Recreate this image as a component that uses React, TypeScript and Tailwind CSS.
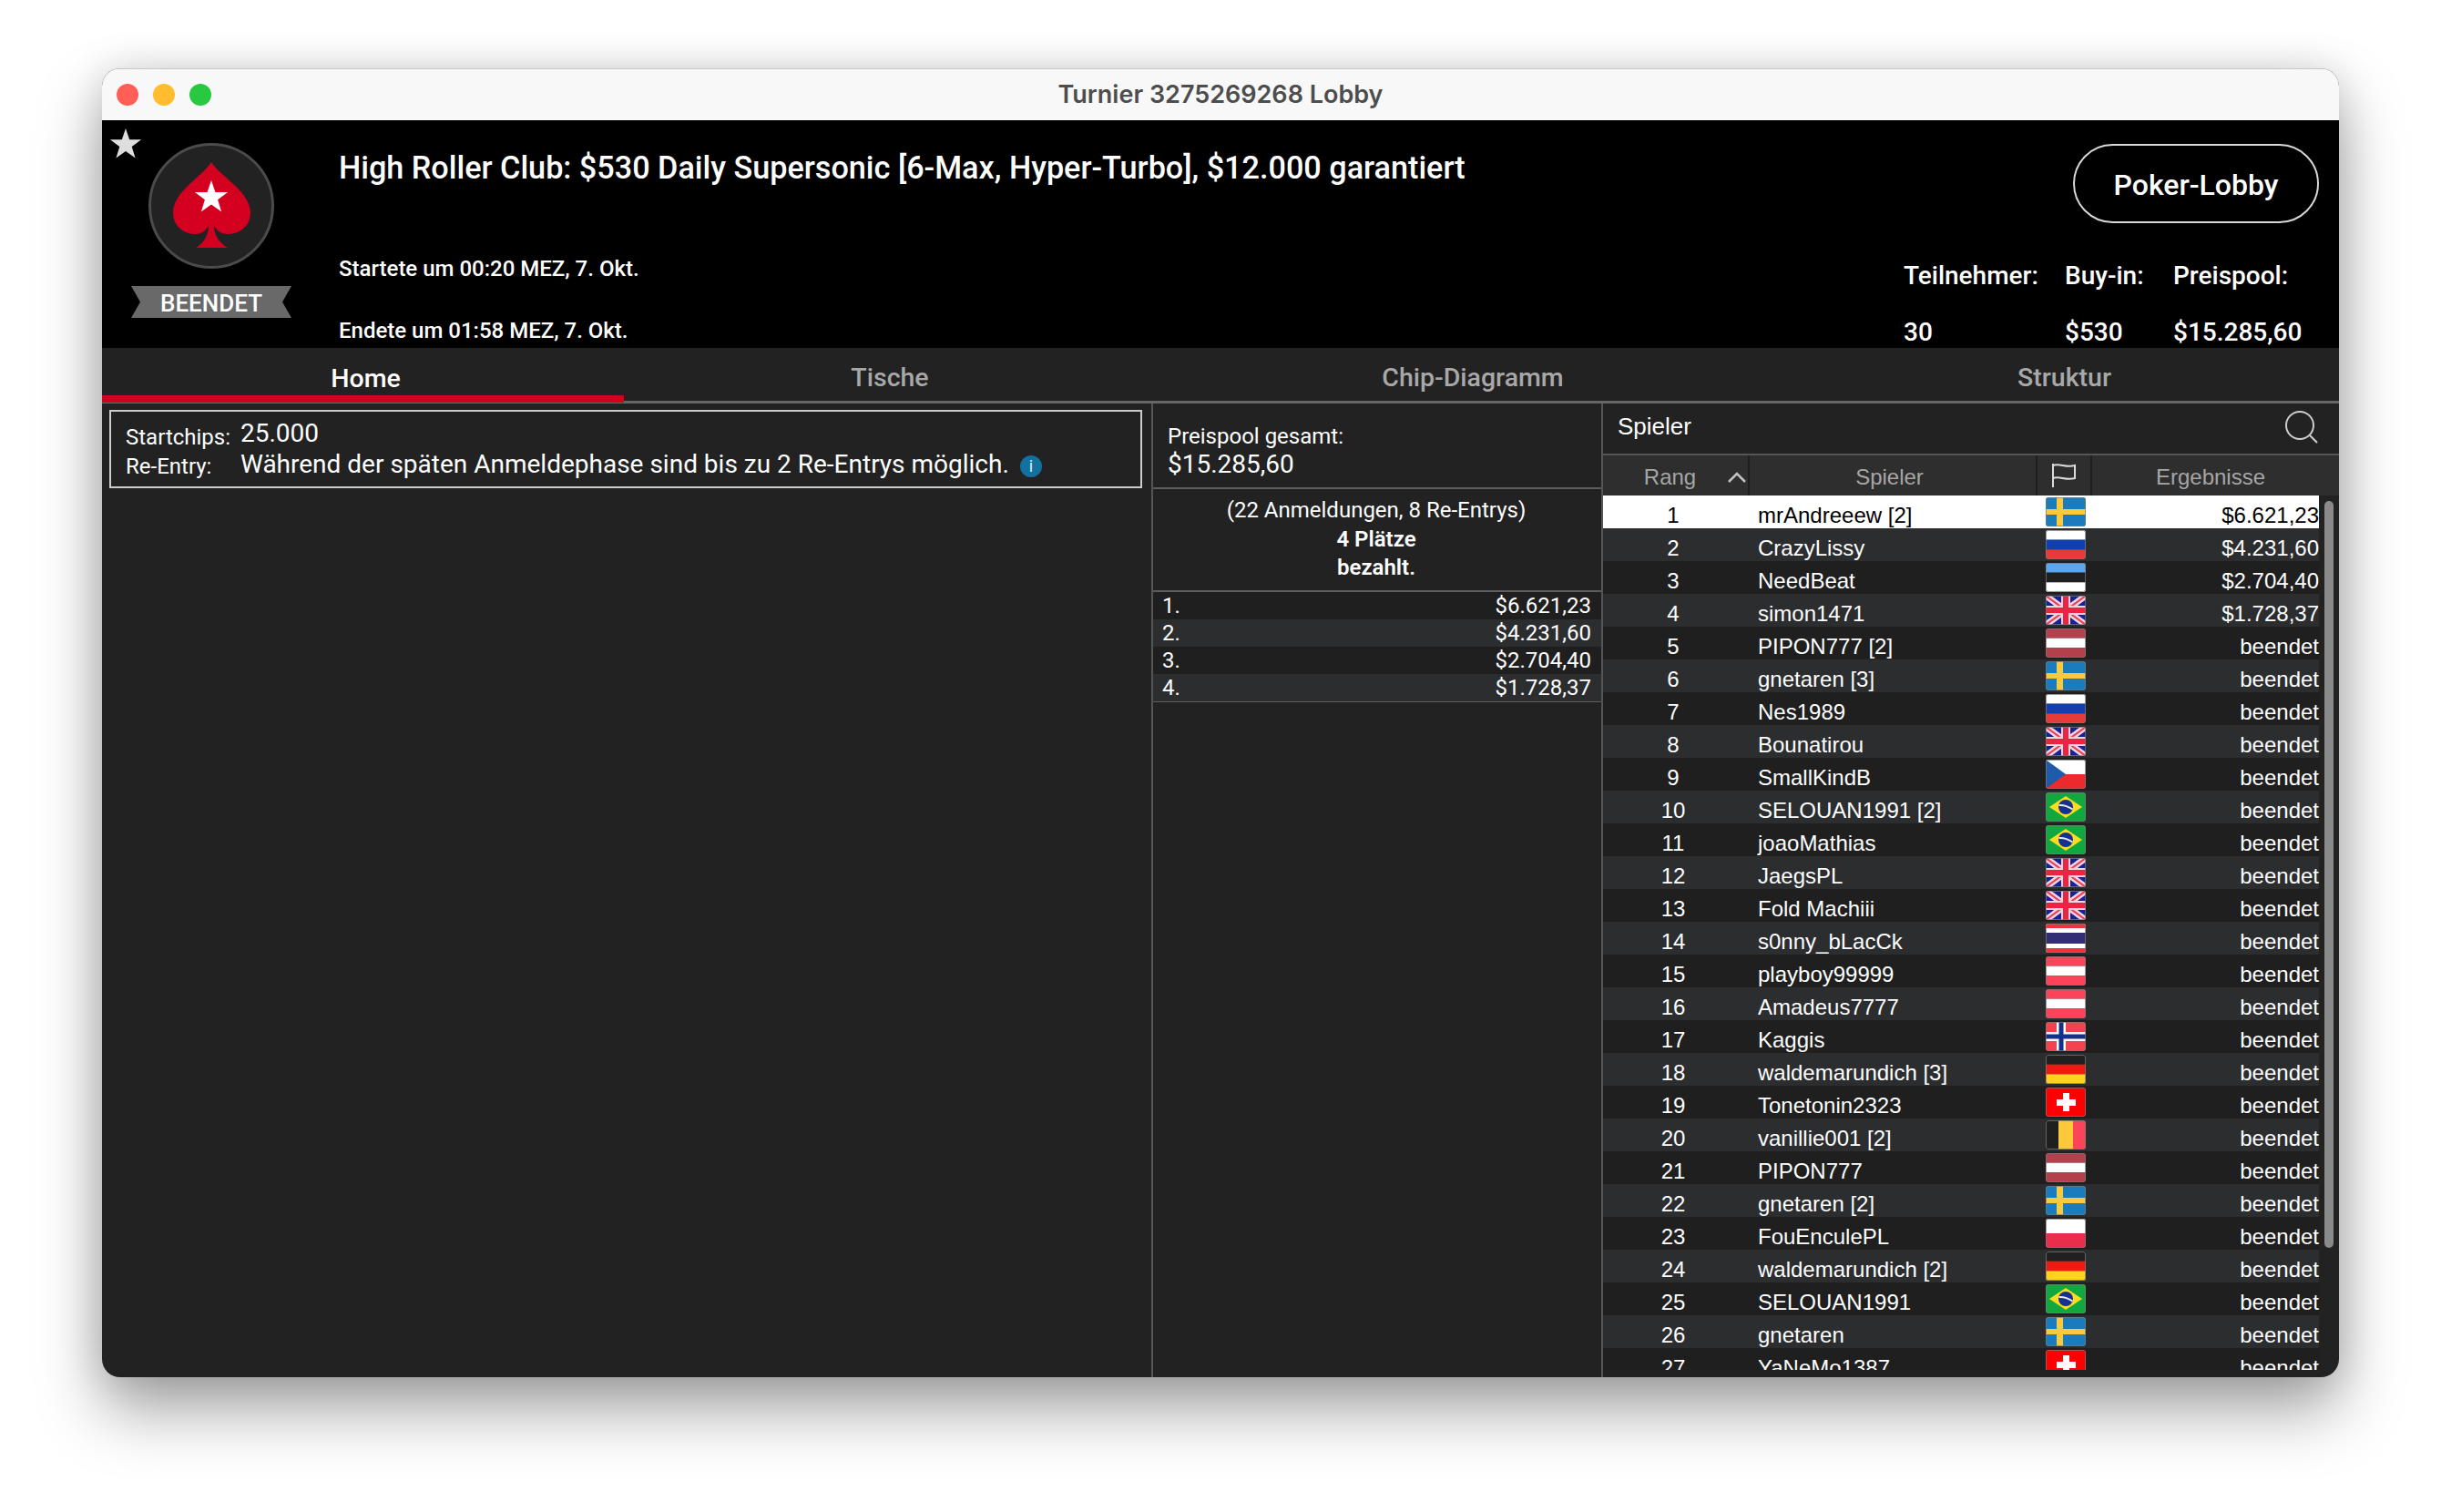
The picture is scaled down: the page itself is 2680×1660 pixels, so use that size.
const players: [string, string, string][] = [
  ['1', 'mrAndreeew [2]', 'se'],
  ['2', 'CrazyLissy', 'ru'],
  ['3', 'NeedBeat', 'ee'],
  ['4', 'simon1471', 'gb'],
  ['5', 'PIPON777 [2]', 'lv'],
  ['6', 'gnetaren [3]', 'se'],
  ['7', 'Nes1989', 'ru'],
  ['8', 'Bounatirou', 'gb'],
  ['9', 'SmallKindB', 'cz'],
  ['10', 'SELOUAN1991 [2]', 'br'],
  ['11', 'joaoMathias', 'br'],
  ['12', 'JaegsPL', 'gb'],
  ['13', 'Fold Machiii', 'gb'],
  ['14', 's0nny_bLacCk', 'th'],
  ['15', 'playboy99999', 'at'],
  ['16', 'Amadeus7777', 'at'],
  ['17', 'Kaggis', 'no'],
  ['18', 'waldemarundich [3]', 'de'],
  ['19', 'Tonetonin2323', 'ch'],
  ['20', 'vanillie001 [2]', 'be'],
  ['21', 'PIPON777', 'lv'],
  ['22', 'gnetaren [2]', 'se'],
  ['23', 'FouEnculePL', 'pl'],
  ['24', 'waldemarundich [2]', 'de'],
  ['25', 'SELOUAN1991', 'br'],
  ['26', 'gnetaren', 'se'],
  ['27', 'YaNeMo1387', 'ch'],
];

const results = ['$6.621,23', '$4.231,60', '$2.704,40', '$1.728,37'];

function Stripes({ colors }: { colors: string[] }) {
  const h = 32 / colors.length;
  return (
    <>
      {colors.map((c, i) => (
        <rect key={i} x="0" y={i * h} width="44" height={h} fill={c} />
      ))}
    </>
  );
}

function Flag({ code }: { code: string }) {
  let body = null;
  if (code === 'se')
    body = (
      <>
        <rect width="44" height="32" fill="#1a7cbd" />
        <rect x="12" width="7" height="32" fill="#fdc93c" />
        <rect y="13" width="44" height="6" fill="#fdc93c" />
      </>
    );
  if (code === 'ru') body = <Stripes colors={['#ffffff', '#0f3fb0', '#e63b36']} />;
  if (code === 'ee') body = <Stripes colors={['#5ba8f2', '#1f1f1f', '#ffffff']} />;
  if (code === 'lv') body = <Stripes colors={['#b2404d', '#ffffff', '#b2404d']} />;
  if (code === 'at') body = <Stripes colors={['#fb4459', '#ffffff', '#fb4459']} />;
  if (code === 'de') body = <Stripes colors={['#202020', '#ec1c14', '#ffd31f']} />;
  if (code === 'pl') body = <Stripes colors={['#ffffff', '#e92d4c']} />;
  if (code === 'gb')
    body = (
      <>
        <rect width="44" height="32" fill="#16209a" />
        <path d="M0 0L44 32M44 0L0 32" stroke="#f5d5dc" strokeWidth="7" />
        <path d="M0 0L44 32M44 0L0 32" stroke="#ee3a5a" strokeWidth="2" />
        <rect x="17" width="10" height="32" fill="#f5d5dc" />
        <rect y="11" width="44" height="10" fill="#f5d5dc" />
        <rect x="19" width="6" height="32" fill="#ec2444" />
        <rect y="13" width="44" height="6" fill="#ec2444" />
      </>
    );
  if (code === 'cz')
    body = (
      <>
        <rect width="44" height="16" fill="#ffffff" />
        <rect y="16" width="44" height="16" fill="#ec2a2c" />
        <path d="M0 0L22 16L0 32Z" fill="#1f5ba8" />
      </>
    );
  if (code === 'br')
    body = (
      <>
        <rect width="44" height="32" fill="#10a83f" />
        <path d="M22 4L40 16L22 28L4 16Z" fill="#fbdc1e" />
        <circle cx="22" cy="16" r="8" fill="#16308f" />
        <path d="M14.5 14C20 13.5 25 15.5 29.5 18.5" stroke="#e8e8e8" strokeWidth="2" fill="none" />
      </>
    );
  if (code === 'th')
    body = (
      <>
        <rect width="44" height="32" fill="#ffffff" />
        <rect width="44" height="5" fill="#f0323e" />
        <rect y="27" width="44" height="5" fill="#f0323e" />
        <rect y="10" width="44" height="12" fill="#332d74" />
      </>
    );
  if (code === 'no')
    body = (
      <>
        <rect width="44" height="32" fill="#f2434f" />
        <rect x="12" width="10" height="32" fill="#ffffff" />
        <rect y="11" width="44" height="10" fill="#ffffff" />
        <rect x="14.5" width="5" height="32" fill="#13308a" />
        <rect y="13.5" width="44" height="5" fill="#13308a" />
      </>
    );
  if (code === 'ch')
    body = (
      <>
        <rect width="44" height="32" fill="#fe0000" />
        <rect x="19" y="6" width="7" height="20" fill="#ffffff" />
        <rect x="12" y="13" width="21" height="7" fill="#ffffff" />
      </>
    );
  if (code === 'be')
    body = (
      <>
        <rect width="14" height="32" fill="#1f1f1f" />
        <rect x="14" width="16" height="32" fill="#fdc93c" />
        <rect x="30" width="14" height="32" fill="#fb4459" />
      </>
    );
  return (
    <svg viewBox="0 0 44 32" preserveAspectRatio="none" className="w-[44px] h-[32px] rounded-[3px]">
      {body}
      <rect x="0.5" y="0.5" width="43" height="31" rx="2.5" fill="none" stroke="#7a7a7a" strokeOpacity="0.75" />
    </svg>
  );
}

function StarShape({ fill }: { fill: string }) {
  return (
    <polygon
      fill={fill}
      points="70,43 74.4,55.9 88.1,56.1 77.1,64.3 81.2,77.4 70,69.5 58.8,77.4 62.9,64.3 51.9,56.1 65.6,55.9"
    />
  );
}

function Logo() {
  return (
    <svg viewBox="0 0 140 140" className="w-[140px] h-[140px]">
      <circle cx="70" cy="70" r="67.5" fill="#222222" stroke="#4b4b4b" strokeWidth="3" />
      <path
        d="M70 22C60 38 28 54 28 78C28 92 40 101 52 101C60 101 64 97 67 92C67 104 60 112 53 116L88 116C81 112 73 104 73 92C76 97 80 101 88 101C101 101 113 92 113 78C113 54 80 38 70 22Z"
        fill="#d40020"
      />
      <g transform="translate(0 -1)">
        <StarShape fill="#ffffff" />
      </g>
    </svg>
  );
}

export default function App() {
  return (
    <div className="w-[2680px] h-[1660px] bg-white pl-[112px] pt-[75px] font-['Roboto',sans-serif]">
      <div className="w-[2456px] h-[1437px] rounded-[20px] overflow-hidden flex flex-col bg-[#222222] shadow-[0_36px_70px_rgba(0,0,0,0.36),0_0_44px_rgba(0,0,0,0.13)]">
        {/* title bar */}
        <div className="relative h-[57px] shrink-0 bg-[#f8f8f8] border-t border-[#c8c8c8] flex items-center justify-center">
          <div className="absolute left-[16px] top-[16px] flex gap-[16px]">
            <span className="w-[24px] h-[24px] rounded-full bg-[#ff5f57]" />
            <span className="w-[24px] h-[24px] rounded-full bg-[#febc2e]" />
            <span className="w-[24px] h-[24px] rounded-full bg-[#28c840]" />
          </div>
          <span className="font-['Inter',sans-serif] font-semibold text-[27px] leading-none pb-[2px] text-[#4d4d4d]">
            Turnier 3275269268 Lobby
          </span>
        </div>

        {/* header */}
        <div className="relative h-[250px] shrink-0 bg-black text-white flex">
          <svg viewBox="51 43 38 36" className="absolute left-[8px] top-[9px] w-[36px] h-[34px]">
            <StarShape fill="#dedede" />
          </svg>
          <div className="w-[260px] shrink-0 flex flex-col items-center pt-[24px] pr-[20px]">
            <Logo />
            <div className="relative mt-[18px] w-[176px] h-[35px] flex items-center justify-center">
              <svg viewBox="0 0 176 35" className="absolute inset-0 w-full h-full">
                <path d="M0 0H176L166 17.5L176 35H0L10 17.5Z" fill="#696969" />
              </svg>
              <span className="relative text-[26px] font-medium leading-none pt-[2px]">BEENDET</span>
            </div>
          </div>
          <div className="flex-1 flex flex-col">
            <div className="mt-[33px] text-[34.2px] font-medium leading-[38px]">
              High Roller Club: $530 Daily Supersonic [6-Max, Hyper-Turbo], $12.000 garantiert
            </div>
            <div className="mt-[77px] text-[24px] font-medium leading-[30px]">Startete um 00:20 MEZ, 7. Okt.</div>
            <div className="mt-[38px] text-[24px] font-medium leading-[30px]">Endete um 01:58 MEZ, 7. Okt.</div>
          </div>
          <div className="w-[478px] shrink-0 flex flex-col">
            <button className="self-end mr-[22px] mt-[26px] w-[270px] h-[87px] rounded-[44px] border-2 border-[#d8d8d8] text-[32px] font-medium pt-[2px]">
              Poker-Lobby
            </button>
            <div className="mt-[43px] grid grid-cols-[177px_119px_1fr] gap-y-[32px] text-[28px] font-medium leading-[30px]">
              <span>Teilnehmer:</span>
              <span>Buy-in:</span>
              <span>Preispool:</span>
              <span>30</span>
              <span>$530</span>
              <span>$15.285,60</span>
            </div>
          </div>
        </div>

        {/* tabs */}
        <div className="h-[61px] shrink-0 border-b-[3px] border-[#666666] grid grid-cols-[573px_584px_696px_603px] text-[28.5px] font-medium text-[#a8a8a8]">
          <div className="relative flex justify-center pt-[16px] text-white leading-[36px]">
            <span className="mr-[-6px]">Home</span>
            <div className="absolute left-0 right-0 top-[52px] h-[8px] bg-[#d0021f]" />
          </div>
          <div className="flex justify-center pt-[15px] leading-[36px]">Tische</div>
          <div className="flex justify-center pt-[15px] leading-[36px]">Chip-Diagramm</div>
          <div className="flex justify-center pt-[15px] leading-[36px]">Struktur</div>
        </div>

        {/* content */}
        <div className="flex-1 flex min-h-0 text-white">
          <div className="w-[1154px] shrink-0 border-r-2 border-[#555555] pt-[7px] pl-[8px]">
            <div className="w-[1134px] h-[86px] border-2 border-[#cccccc] pl-[16px] pt-[7px]">
              <div className="flex items-center h-[33px]">
                <span className="w-[126px] text-[24px] leading-none pt-[8px]">Startchips:</span>
                <span className="text-[28px] leading-none">25.000</span>
              </div>
              <div className="flex items-center h-[33px] mt-[1px]">
                <span className="w-[126px] text-[24px] leading-none pt-[4px]">Re-Entry:</span>
                <span className="text-[28px] leading-none">Während der späten Anmeldephase sind bis zu 2 Re-Entrys möglich.</span>
                <span className="ml-[12px] mt-[4px] w-[24px] h-[24px] rounded-full bg-[#12719f] text-[18px] leading-[24px] text-center text-[#d8eef8]">
                  i
                </span>
              </div>
            </div>
          </div>

          <div className="w-[494px] shrink-0 border-r-2 border-[#555555]">
            <div className="h-[94px] border-b-2 border-[#5e5e5e] pl-[16px] pt-[21px]">
              <div className="text-[24px] leading-[30px]">Preispool gesamt:</div>
              <div className="text-[28px] leading-[31px]">$15.285,60</div>
            </div>
            <div className="h-[113px] border-b-2 border-[#5e5e5e] pt-[8px] pr-[2px] text-center text-[24px] leading-[31.5px]">
              <div>(22 Anmeldungen, 8 Re-Entrys)</div>
              <div className="font-semibold">4 Plätze</div>
              <div className="font-semibold">bezahlt.</div>
            </div>
            <div className="border-b border-[#5e5e5e]">
              {results.map((r, i) => (
                <div
                  key={r}
                  className={`h-[30px] flex justify-between items-center pl-[10px] pr-[11px] text-[24px] leading-none ${i % 2 ? 'bg-[#2c2d2f]' : 'bg-[#1f1f1f]'}`}
                >
                  <span>{i + 1}.</span>
                  <span>{r}</span>
                </div>
              ))}
            </div>
          </div>

          <div className="flex-1 min-w-0 flex flex-col font-['Liberation_Sans',sans-serif]">
            <div className="h-[55px] shrink-0 border-b-2 border-[#555555] flex items-center justify-between pl-[16px] pr-[22px] box-content">
              <span className="text-[26px] leading-none pb-[6px]">Spieler</span>
              <svg viewBox="0 0 38 38" className="w-[38px] h-[38px] mb-[4px]" fill="none" stroke="#cfcfcf" strokeWidth="2">
                <circle cx="17" cy="17" r="15" />
                <path d="M28 28L36 36" />
              </svg>
            </div>
            <div className="h-[44px] shrink-0 bg-[#2e2e2e] flex text-[24px] text-[#a6a6a6] leading-none">
              <div className="w-[161px] border-r-2 border-[#1e1e1e] relative flex items-center justify-center pr-[12px] pt-[3px]">
                <span>Rang</span>
                <svg viewBox="0 0 20 12" className="absolute left-[137px] top-[18px] w-[20px] h-[12px]" fill="none" stroke="#c4c4c4" strokeWidth="2.5">
                  <path d="M1 11L10 2L19 11" />
                </svg>
              </div>
              <div className="w-[316px] border-r-2 border-[#1e1e1e] flex items-center justify-center pr-[7px] pt-[3px]">Spieler</div>
              <div className="w-[60px] border-r-2 border-[#1e1e1e] flex items-center justify-center">
                <svg viewBox="0 0 30 28" className="w-[30px] h-[28px]" fill="none" stroke="#dcdcdc" strokeWidth="2">
                  <path d="M3 1V27M3 3C10 0 17 6 27 3V17C17 20 10 14 3 17" />
                </svg>
              </div>
              <div className="flex-1 flex items-center justify-center pr-[11px] pt-[3px]">Ergebnisse</div>
            </div>
            <div className="h-[960px] shrink-0 overflow-hidden flex">
              <div className="w-[786px] shrink-0">
                {players.map(([rank, name, flag], i) => (
                  <div
                    key={rank}
                    className={`h-[36px] flex items-center text-[24px] leading-none ${
                      i === 0 ? 'bg-white text-black' : i % 2 ? 'bg-[#2c2d2f]' : 'bg-[#1f1f1f]'
                    }`}
                  >
                    <span className="w-[154px] text-center pt-[7px]">{rank}</span>
                    <span className="w-[332px] pl-[16px] pt-[7px]">{name}</span>
                    <Flag code={flag} />
                    <span className="flex-1 text-right pt-[7px]">{i < 4 ? results[i] : 'beendet'}</span>
                  </div>
                ))}
              </div>
              <div className="ml-[6px] mt-[6px] w-[10px] h-[820px] rounded-full bg-[#8a8a8a]" />
            </div>
          </div>
        </div>
      </div>
    </div>
  );
}
